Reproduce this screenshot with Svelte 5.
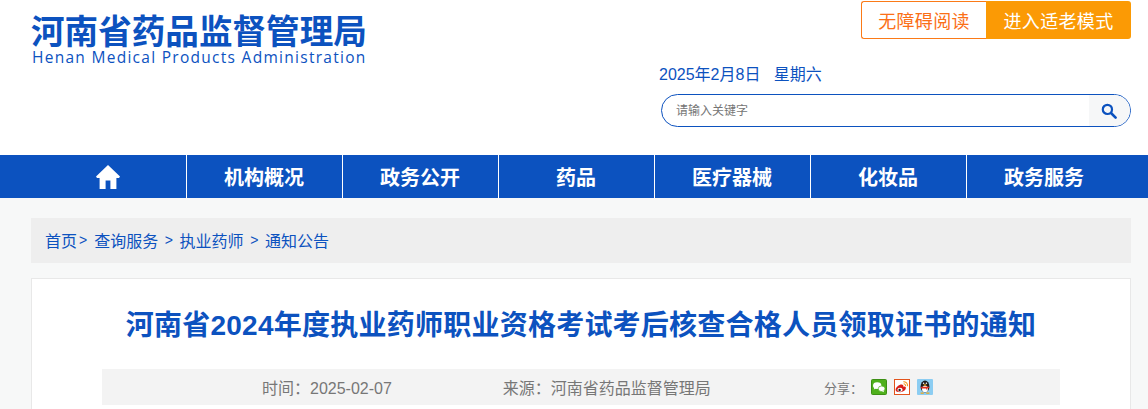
<script>
	const navs = ['机构概况', '政务公开', '药品', '医疗器械', '化妆品', '政务服务'];
	const crumbs = ['查询服务', '执业药师', '通知公告'];
</script>

<div class="page">
	<header class="head">
		<div class="logo">
			<div class="logo-cn">河南省药品监督管理局</div>
			<div class="logo-en">Henan Medical Products Administration</div>
		</div>
		<div class="tools">
			<div class="btns">
				<a class="btn-line">无障碍阅读</a>
				<a class="btn-fill">进入适老模式</a>
			</div>
			<div class="date">2025年2月8日&nbsp;&nbsp;&nbsp;星期六</div>
			<div class="search">
				<span class="placeholder">请输入关键字</span>
				<span class="search-btn">
					<svg viewBox="0 0 16 16" width="16" height="16">
						<circle cx="6.4" cy="6.4" r="4.6" fill="none" stroke="#0c52bf" stroke-width="2.2" />
						<path d="M10 10l4.6 4.6" stroke="#0c52bf" stroke-width="2.6" stroke-linecap="round" />
					</svg>
				</span>
			</div>
		</div>
	</header>

	<nav class="nav">
		<div class="nav-in">
			<a class="nav-item home">
				<svg viewBox="0 0 24 24" width="24" height="24">
					<path d="M12 0L0 11.5l1 1.5h2.6v11H9.6v-8.5h4.8V24h6V13H23l1-1.5z" fill="#fff" />
				</svg>
			</a>
			{#each navs as item}
				<a class="nav-item">{item}</a>
			{/each}
		</div>
	</nav>

	<main class="wrap">
		<div class="crumbs">
			<span>首页</span><i class="first">&gt;</i>
			{#each crumbs as c, idx}
				<span>{c}</span>
				{#if idx < crumbs.length - 1}<i>&gt;</i>{/if}
			{/each}
		</div>

		<article class="card">
			<h1>河南省2024年度执业药师职业资格考试考后核查合格人员领取证书的通知</h1>
			<div class="meta">
				<span class="m-time">时间：2025-02-07</span>
				<span class="m-src">来源：河南省药品监督管理局</span>
				<span class="m-share">分享：</span>
				<span class="icons">
					<svg viewBox="0 0 16 16" width="16" height="16">
						<rect x=".5" y=".5" width="15" height="15" rx="1" fill="#4fb01c" stroke="#3c8f14" />
						<ellipse cx="6.2" cy="6.6" rx="4.2" ry="3.4" fill="#fff" />
						<path d="M3.4 8.4l-.6 2 2.2-1z" fill="#fff" />
						<ellipse cx="10.6" cy="9.8" rx="3.4" ry="2.8" fill="#fff" stroke="#4fb01c" stroke-width=".7" />
						<path d="M12.4 11.6l.6 1.6-2-1z" fill="#fff" />
					</svg>
					<svg viewBox="0 0 16 16" width="16" height="16">
						<rect x=".5" y=".5" width="15" height="15" fill="#fff" stroke="#e2531c" />
						<path d="M1.6 11c0-2.8 3.4-5.4 6-5.4 1.6 0 2 1 1.6 2.2 2-.6 3 .2 2.6 1.8-.4 2-3 3.6-5.6 3.6S1.6 12.8 1.6 11z" fill="#d8201a" />
						<ellipse cx="6" cy="10.8" rx="2.6" ry="2" fill="#fff" />
						<circle cx="5.6" cy="11" r="1.2" fill="#222" />
						<path d="M9.4 2.6a4.2 4.2 0 0 1 4.2 4.6M9.6 4.8a2 2 0 0 1 2 2.4" fill="none" stroke="#f59a23" stroke-width="1.1" />
					</svg>
					<svg viewBox="0 0 16 16" width="16" height="16">
						<rect width="16" height="16" rx="1" fill="#8ccdf2" />
						<ellipse cx="8" cy="7.4" rx="4.4" ry="6" fill="#1c1c1c" />
						<ellipse cx="8" cy="10" rx="3" ry="3.2" fill="#fff" />
						<ellipse cx="8" cy="6" rx="1.6" ry=".8" fill="#f2a516" />
						<circle cx="6.6" cy="4.2" r=".8" fill="#fff" />
						<circle cx="9.4" cy="4.2" r=".8" fill="#fff" />
						<path d="M3.8 7.8h8.4v1.3l-2 .5v2l-1.2-2H3.8z" fill="#e0301e" />
						<path d="M3.6 13.6h3.2v1.2H3.6zM9.2 13.6h3.2v1.2H9.2z" fill="#f2a516" />
					</svg>
				</span>
			</div>
		</article>
	</main>
</div>

<style>
	:global(body) {
		margin: 0;
		background: #f7f8f8;
		overflow: hidden;
	}
	.page {
		height: 409px;
		overflow: hidden;
		font-family: 'Liberation Sans', 'Noto Sans CJK SC', sans-serif;
	}
	.head {
		display: flex;
		justify-content: space-between;
		height: 155px;
		padding: 0 17px 0 31px;
		background: #fff;
	}
	.logo {
		padding-top: 11px;
		color: #0c52bf;
		width: 336px;
	}
	.logo-cn {
		font-family: 'Noto Sans CJK SC', sans-serif;
		font-size: 33.6px;
		font-weight: 700;
		line-height: 38px;
		white-space: nowrap;
	}
	.logo-en {
		padding-left: 1px;
		font-family: 'Open Sans', sans-serif;
		font-size: 15.5px;
		line-height: 16px;
		letter-spacing: 1.28px;
		white-space: nowrap;
	}
	.tools {
		width: 470px;
		display: flex;
		flex-direction: column;
	}
	.btns {
		display: flex;
		justify-content: flex-end;
		margin-top: 1px;
		height: 38px;
		font-size: 18px;
	}
	.btn-line,
	.btn-fill {
		display: flex;
		align-items: center;
		justify-content: center;
		box-sizing: border-box;
		font-family: 'Noto Sans CJK SC', sans-serif;
		letter-spacing: 0.35px;
	}
	.btn-line {
		width: 125px;
		border: 1px solid #fb7a17;
		border-right: 0;
		border-radius: 3px 0 0 3px;
		color: #fb6f17;
	}
	.btn-fill {
		width: 145px;
		background: #fb9a05;
		color: #fff;
		border-radius: 0 3px 3px 0;
	}
	.date {
		margin-top: 25px;
		margin-left: -2px;
		font-size: 16px;
		line-height: 22px;
		color: #0c52bf;
	}
	.search {
		margin-top: 8px;
		box-sizing: border-box;
		height: 33px;
		border: 1px solid #0c52bf;
		border-radius: 17px;
		display: flex;
		align-items: center;
		justify-content: space-between;
		overflow: hidden;
	}
	.placeholder {
		margin-left: 14px;
		padding-bottom: 3px;
		font-size: 12px;
		color: #757575;
	}
	.search-btn {
		box-sizing: border-box;
		width: 41px;
		height: 100%;
		padding-right: 2px;
		background: #f6f7f8;
		display: flex;
		align-items: center;
		justify-content: center;
	}
	.nav {
		height: 43px;
		background: #0c52bf;
	}
	.nav-in {
		display: flex;
		margin-left: 30px;
		height: 100%;
	}
	.nav-item {
		box-sizing: border-box;
		width: 156px;
		padding-right: 1px;
		display: flex;
		align-items: center;
		justify-content: center;
		border-left: 1px solid #fff;
		color: #fff;
		font-size: 20px;
		font-weight: 700;
		font-family: 'Noto Sans CJK SC', sans-serif;
	}
	.nav-item.home {
		border-left: 0;
		padding-right: 0;
	}
	.wrap {
		width: 1100px;
		margin: 20px 0 0 31px;
	}
	.crumbs {
		box-sizing: border-box;
		display: flex;
		align-items: center;
		height: 45px;
		padding: 0 0 2px 14px;
		background: #eee;
		color: #0c52bf;
		font-size: 16px;
	}
	.crumbs i {
		font-style: normal;
		margin: 0 6.6px;
		font-size: 14px;
		font-family: 'Liberation Sans', sans-serif;
	}
	.crumbs i.first {
		margin: 0 7px 0 2px;
	}
	.card {
		margin-top: 15px;
		border: 1px solid #e8e8e8;
		background: #fff;
		padding: 0 70px;
		height: 200px;
	}
	h1 {
		margin: 27px 0 0;
		text-align: center;
		color: #0c52bf;
		font-size: 28px;
		font-weight: 700;
		line-height: 40px;
		letter-spacing: 0.24px;
		white-space: nowrap;
	}
	.meta {
		display: flex;
		align-items: center;
		margin-top: 23px;
		height: 36px;
		background: #f3f3f3;
		color: #777;
		font-size: 16px;
	}
	.m-time {
		margin-left: 160px;
	}
	.m-src {
		margin-left: 111px;
	}
	.m-share {
		margin-left: 113px;
		font-size: 13px;
	}
	.icons {
		display: flex;
		gap: 7px;
		margin-left: 8px;
	}
	.icons svg {
		display: block;
	}
</style>
